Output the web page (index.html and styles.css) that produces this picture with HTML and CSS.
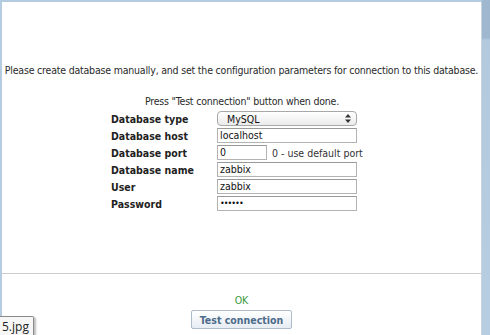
FILE: index.html
```html
<!DOCTYPE html>
<html lang="en">
<head>
  <meta charset="UTF-8">
  <title>Zabbix installation</title>
  <link rel="stylesheet" href="styles.css">
</head>
<body>
  <div class="page">
    <div class="panel">
      <div class="content">
        <p class="intro">Please create database manually, and set the configuration parameters for connection to this database.</p>
        <p class="hint">Press "Test connection" button when done.</p>

        <div class="form">
          <label>Database type</label>
          <div class="select">
            <span>MySQL</span>
            <svg width="6" height="9" viewBox="0 0 6 9"><path d="M0 3.5 L3 0 L6 3.5 Z M0 5.5 L3 9 L6 5.5 Z" fill="#333"/></svg>
          </div>

          <label>Database host</label>
          <div class="field"><span class="input wide">localhost</span></div>

          <label>Database port</label>
          <div class="field"><span class="input short">0</span><span class="note">0 - use default port</span></div>

          <label>Database name</label>
          <div class="field"><span class="input wide">zabbix</span></div>

          <label>User</label>
          <div class="field"><span class="input wide">zabbix</span></div>

          <label>Password</label>
          <div class="field"><span class="input wide dots">&bull;&bull;&bull;&bull;&bull;&bull;</span></div>
        </div>
      </div>

      <div class="footer">
        <div class="status">OK</div>
        <button class="button">Test connection</button>
      </div>
    </div>
    <div class="side"></div>
  </div>

  <!-- file name tooltip -->
  <div class="tooltip">5.jpg</div>
</body>
</html>
```

FILE: styles.css
```css
body {
  margin: 0;
  width: 490px;
  height: 335px;
  overflow: hidden;
  background-color: #b5cbe0;
  font-family: "DejaVu Sans Condensed", "DejaVu Sans", sans-serif;
  font-size: 10.5px;
  color: #2a2a2a;
}

.page {
  display: flex;
  height: 100%;
}

.panel {
  width: 479px;
  margin: 2px 0 0 2px;
  background-color: #fff;
  border-right: 1px solid #c9d3dd;
  display: flex;
  flex-direction: column;
}

.side {
  flex: 1;
  background: linear-gradient(#9fb8d0 0, #9fb8d0 38px, #b3c9de 40px, #b7cde2 100%);
}

.content {
  height: 210px;
  padding-top: 61px;
  border-bottom: 1px solid #cccccc;
}

.intro, .hint {
  margin: 0;
  line-height: 14px;
  text-align: center;
  white-space: nowrap;
}

.intro {
  letter-spacing: -0.2px;
}

.hint {
  margin-top: 17px;
  padding-left: 1px;
  letter-spacing: -0.2px;
}

.form {
  display: grid;
  grid-template-columns: 106px auto;
  grid-auto-rows: 17px;
  margin: 2px 0 0 109px;
  align-items: center;
}

.form label {
  font-weight: bold;
  color: #222;
}

.field {
  display: flex;
  align-items: center;
}

.input {
  box-sizing: border-box;
  height: 15px;
  line-height: 13px;
  padding: 0 2px;
  border: 1px solid #b3b3b3;
  border-top-color: #999;
  color: #111;
}

.wide {
  width: 140px;
}

.short {
  width: 50px;
}

.dots {
  font-size: 9px;
  letter-spacing: -1px;
}

.note {
  margin-left: 5px;
  color: #333;
}

.select {
  box-sizing: border-box;
  width: 140px;
  height: 15px;
  padding: 0 5px 0 9px;
  border: 1px solid #a8a8a8;
  border-radius: 4px;
  background: linear-gradient(#ffffff, #ebebeb);
  display: flex;
  align-items: center;
  justify-content: space-between;
  color: #111;
}

.footer {
  display: flex;
  flex-direction: column;
  align-items: center;
  padding-top: 19px;
}

.status {
  line-height: 14px;
  color: #3c9a3c;
}

.button {
  margin-top: 3px;
  width: 101px;
  height: 19px;
  padding: 0;
  border: 1px solid #aebccb;
  border-radius: 2px;
  background: linear-gradient(#ffffff, #e6edf3);
  font-family: "DejaVu Sans Condensed", "DejaVu Sans", sans-serif;
  font-size: 10.5px;
  font-weight: bold;
  color: #4d6b8a;
}

.tooltip {
  position: absolute;
  left: 0;
  top: 316px;
  height: 19px;
  padding: 0 4px 0 2px;
  background-color: #f7f7f7;
  border: 1px solid #8a8a8a;
  border-left: none;
  border-radius: 0 2px 0 0;
  box-shadow: 2px 1px 2px rgba(0, 0, 0, 0.25);
  font-family: "Open Sans", sans-serif;
  font-size: 12px;
  line-height: 19px;
  color: #222;
}
```
